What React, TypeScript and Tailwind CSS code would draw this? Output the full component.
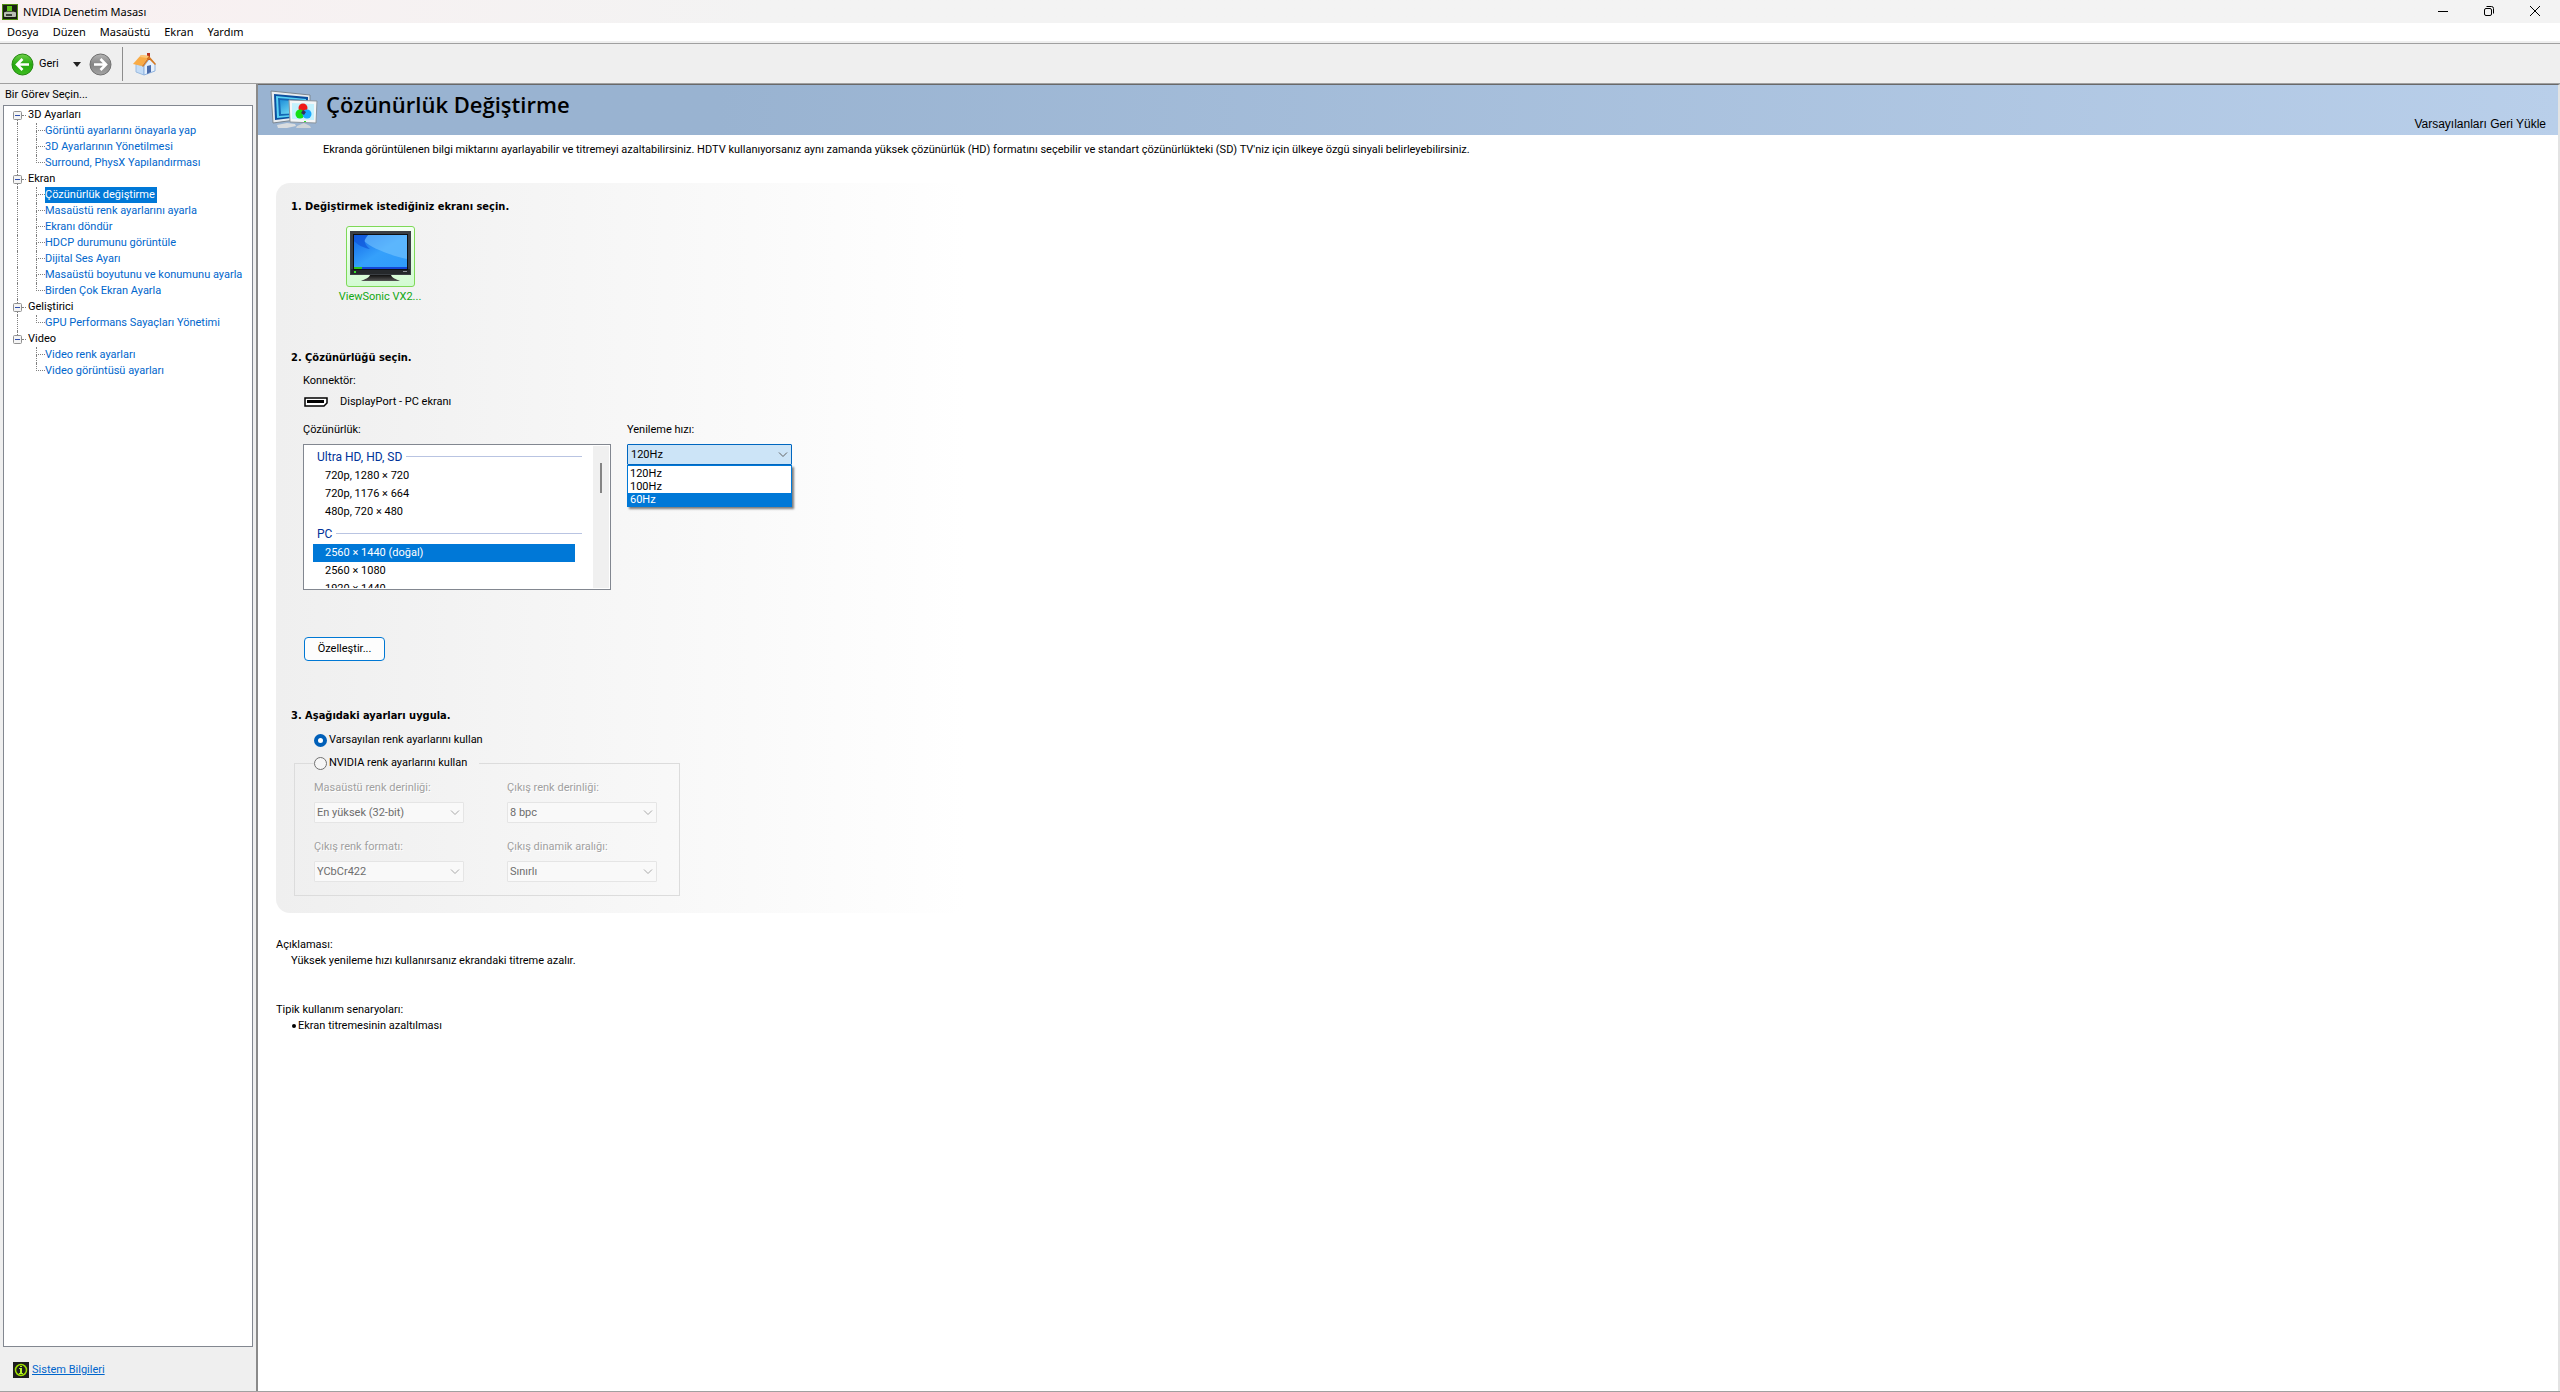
import { useState } from "react"

const taskGroups = [
  {
    title: "3D Ayarları",
    items: ["Görüntü ayarlarını önayarla yap", "3D Ayarlarının Yönetilmesi", "Surround, PhysX Yapılandırması"],
  },
  {
    title: "Ekran",
    items: [
      "Çözünürlük değiştirme",
      "Masaüstü renk ayarlarını ayarla",
      "Ekranı döndür",
      "HDCP durumunu görüntüle",
      "Dijital Ses Ayarı",
      "Masaüstü boyutunu ve konumunu ayarla",
      "Birden Çok Ekran Ayarla",
    ],
  },
  { title: "Geliştirici", items: ["GPU Performans Sayaçları Yönetimi"] },
  { title: "Video", items: ["Video renk ayarları", "Video görüntüsü ayarları"] },
]

const menus = ["Dosya", "Düzen", "Masaüstü", "Ekran", "Yardım"]
const refreshRates = ["120Hz", "100Hz", "60Hz"]
const hdModes = ["720p, 1280 × 720", "720p, 1176 × 664", "480p, 720 × 480"]
const pcModes = ["2560 × 1440 (doğal)", "2560 × 1080", "1920 × 1440"]

const colorFields = [
  { id: "desktop-depth", label: "Masaüstü renk derinliği:", value: "En yüksek (32-bit)" },
  { id: "output-depth", label: "Çıkış renk derinliği:", value: "8 bpc" },
  { id: "output-format", label: "Çıkış renk formatı:", value: "YCbCr422" },
  { id: "dynamic-range", label: "Çıkış dinamik aralığı:", value: "Sınırlı" },
]

function AppIcon() {
  return (
    <svg width="16" height="16" viewBox="0 0 16 16" aria-hidden="true">
      <rect width="16" height="16" fill="#1a1f14" />
      <rect x="0.5" y="0.5" width="15" height="15" fill="none" stroke="#4f8a10" />
      <rect x="5" y="2" width="5" height="5" fill="#5fc21a" />
      <path d="M4 7h8l1 2H3z" fill="#4a5a3a" />
      <rect x="2" y="8" width="12" height="5" rx="1" fill="#b9bdb4" />
      <rect x="4" y="10" width="6" height="2" fill="#3d4239" />
    </svg>
  )
}

function ArrowCircle({ forward = false }: { forward?: boolean }) {
  const id = forward ? "grad-forward" : "grad-back"
  return (
    <svg width="23" height="23" viewBox="0 0 23 23" aria-hidden="true">
      <defs>
        <linearGradient id={id} x1="0" y1="0" x2="0" y2="1">
          <stop offset="0" stopColor={forward ? "#b4b4b4" : "#6fd04a"} />
          <stop offset="0.5" stopColor={forward ? "#858585" : "#25a80f"} />
          <stop offset="1" stopColor={forward ? "#a3a3a3" : "#3ebd20"} />
        </linearGradient>
      </defs>
      <circle cx="11.5" cy="11.5" r="10.5" fill={`url(#${id})`} stroke={forward ? "#6f6f6f" : "#23860f"} />
      <path
        d={forward ? "M5 11.500H17M11.500 6L17 11.500L11.500 17" : "M18 11.500H6M11.500 6L6 11.500L11.500 17"}
        fill="none"
        stroke="#fff"
        strokeWidth="2.600"
      />
    </svg>
  )
}

function HomeIcon() {
  return (
    <svg width="24" height="24" viewBox="0 0 24 24" aria-hidden="true">
      <path d="M3 12L11 14V23L3 20z" fill="#c4dcf6" stroke="#9bbbe0" />
      <path d="M11 14L17 6L22 12V19L11 23z" fill="#e6f1fd" stroke="#8fb2de" />
      <path d="M14 1h3v7h-3z" fill="#b8321f" />
      <path d="M0 12L8 3L16 4L9 14z" fill="#f9ab45" />
      <path d="M8 3L16 4L14 6L7 5z" fill="#fcc77a" />
      <path d="M16 4L23 12L22 13L16 7L10 15L9 14z" fill="#d77a22" />
      <path d="M14 14l4-1v7l-4 2z" fill="#4b6cab" />
    </svg>
  )
}

function DisplaysIcon() {
  return (
    <svg width="48" height="40" viewBox="0 0 48 40" aria-hidden="true">
      <defs>
        <linearGradient id="big-screen" x1="0" y1="0" x2="1" y2="1">
          <stop offset="0" stopColor="#1f8fd8" />
          <stop offset="1" stopColor="#8df3ff" />
        </linearGradient>
      </defs>
      <path d="M7 35l10-2 8 1 1 2-9 2h-9z" fill="#d9dde0" />
      <path d="M1 1L40 5V28L3 33z" fill="#e8ecef" stroke="#7c8791" />
      <path d="M4 4L38 7V26L5 30z" fill="#0b4f9e" />
      <path d="M6 6L36 9V25L7 28z" fill="#58d2f6" />
      <path d="M8 8L34 10V24L9 26z" fill="#1467b4" />
      <path d="M10 10L32 12V23L11 24z" fill="url(#big-screen)" />
      <path d="M27 36l7-3 6 3 1 2H26z" fill="#cfd4d8" />
      <path d="M19 10L47 11L46 33L20 32z" fill="#f4f6f7" stroke="#8b949c" />
      <path d="M22 13L44 14V30L22 29z" fill="#c3f1fd" />
      <circle cx="33" cy="18" r="4.500" fill="#f01818" />
      <circle cx="30" cy="24" r="4.500" fill="#14e014" />
      <circle cx="37" cy="24" r="4.500" fill="#18a8ff" />
      <path d="M33 20l3 2-2 3-3-2z" fill="#303060" />
      <rect x="34" y="31" width="2" height="1" fill="#2fe02f" />
    </svg>
  )
}

function MonitorIcon() {
  return (
    <svg width="61" height="51" viewBox="0 0 61 51" aria-hidden="true">
      <defs>
        <linearGradient id="wallpaper" x1="0" y1="0" x2="1" y2="1">
          <stop offset="0" stopColor="#1268e8" />
          <stop offset="0.5" stopColor="#35a0fb" />
          <stop offset="1" stopColor="#2f9bfa" />
        </linearGradient>
        <linearGradient id="stand" x1="0" y1="0" x2="0" y2="1">
          <stop offset="0" stopColor="#111" />
          <stop offset="1" stopColor="#555" />
        </linearGradient>
      </defs>
      <rect width="61" height="44" fill="#3b3f44" />
      <rect x="1" y="38" width="59" height="5" fill="#25282b" />
      <rect x="3" y="3" width="55" height="36" fill="#0e1013" />
      <rect x="4" y="4" width="53" height="34" fill="url(#wallpaper)" />
      <path d="M18 4H57V28C38 24 20 16 14 10z" fill="#7cc8ff" opacity="0.55" />
      <path d="M4 4H18C13 9 14 13 20 18C12 17 6 12 4 10z" fill="#0e4fd6" opacity="0.6" />
      <rect x="4" y="36" width="53" height="2" fill="#1346d6" />
      <rect x="4" y="36" width="8" height="2" fill="#2fc51d" />
      <rect x="4" y="40" width="2" height="2" fill="#35e02b" />
      <rect x="53" y="40" width="4" height="1" fill="#8b8f94" />
      <path d="M20 44H41C42 47 46 48 50 50H11C15 48 19 47 20 44z" fill="url(#stand)" />
    </svg>
  )
}

function PortIcon() {
  return (
    <svg width="24" height="10" viewBox="0 0 24 10" aria-hidden="true">
      <path d="M1 1H23V6L20 9H1z" fill="#fff" stroke="#000" strokeWidth="1.500" />
      <rect x="3" y="3" width="17" height="3" fill="#000" />
    </svg>
  )
}

function InfoIcon() {
  return (
    <svg width="16" height="16" viewBox="0 0 16 16" aria-hidden="true">
      <rect width="16" height="16" fill="#1d1d1d" />
      <circle cx="8" cy="8" r="5.500" fill="none" stroke="#9fe000" strokeWidth="1.500" />
      <path d="M7 4h2v1H7zM6 6h3v5h1v1H6v-1h1V7H6z" fill="#b6f22a" />
    </svg>
  )
}

function Chevron({ className }: { className: string }) {
  return (
    <svg width="10" height="6" viewBox="0 0 10 6" className={className} aria-hidden="true">
      <path d="M1 0.500L5 4.500L9 0.500" fill="none" stroke="currentColor" />
    </svg>
  )
}

function TitleBar() {
  return (
    <header className="flex h-[23px] items-center justify-between bg-gradient-to-r from-[#f9f0f1] to-[#f3f3f3] to-30% pr-[2px] pl-[2px]">
      <div className="flex items-center gap-[5px]">
        <AppIcon />
        <h1 className="font-['Noto_Sans',sans-serif] text-[11px]">NVIDIA Denetim Masası</h1>
      </div>
      <div className="flex h-[21px] self-start">
        <button type="button" aria-label="Simge durumuna küçült" className="grid w-[46px] place-items-center">
          <svg width="10" height="10" viewBox="0 0 10 10">
            <path d="M0 5.500H10" stroke="#000" />
          </svg>
        </button>
        <button type="button" aria-label="Önceki boyut" className="grid w-[46px] place-items-center">
          <svg width="10" height="10" viewBox="0 0 10 10" fill="none" stroke="#000">
            <rect x="0.500" y="2.500" width="7" height="7" rx="1.500" />
            <path d="M2.500 0.500H7.500Q9.500 0.500 9.500 2.500V7.500" />
          </svg>
        </button>
        <button type="button" aria-label="Kapat" className="grid w-[46px] place-items-center">
          <svg width="10" height="10" viewBox="0 0 10 10">
            <path d="M0 0L10 10M10 0L0 10" stroke="#000" />
          </svg>
        </button>
      </div>
    </header>
  )
}

function Toolbar() {
  return (
    <div className="flex h-10 items-center border-b border-[#a0a0a0] bg-[#efefef] pt-[1px] pl-[11px]">
      <button type="button" className="flex items-center gap-[5px]">
        <ArrowCircle />
        Geri
      </button>
      <button type="button" aria-label="Geçmiş" className="ml-[14px]">
        <svg width="8" height="5" viewBox="0 0 8 5">
          <path d="M0 0H8L4 5z" fill="#222" />
        </svg>
      </button>
      <button type="button" aria-label="İleri" className="ml-2">
        <ArrowCircle forward />
      </button>
      <span className="ml-[10px] h-[34px] w-px bg-[#8d8d8d]" />
      <button type="button" aria-label="Ana sayfa" className="ml-[10px]">
        <HomeIcon />
      </button>
    </div>
  )
}

function TaskTree() {
  const [selected, setSelected] = useState("Çözünürlük değiştirme")

  return (
    <ul className="flex-1 border border-[#828790] bg-white pt-[1px] pl-[9px]">
      {taskGroups.map((group, g) => {
        const lastGroup = g === taskGroups.length - 1
        return (
          <li key={group.title}>
            <div className="flex h-4 items-center">
              <div className="flex h-4 w-[9px] flex-col">
                <span className={g === 0 ? "ml-1 h-[4px]" : "ml-1 h-[4px] border-l border-dotted border-[#808080]"} />
                <svg width="9" height="9" viewBox="0 0 9 9" aria-hidden="true">
                  <rect x="0.500" y="0.500" width="8" height="8" rx="1" fill="#f4f4f4" stroke="#919191" />
                  <path d="M2 4.500H7" stroke="#2f4fae" />
                </svg>
                <span className={lastGroup ? "h-[3px]" : "ml-1 h-[3px] border-l border-dotted border-[#808080]"} />
              </div>
              <span className="w-[4px] border-t border-dotted border-[#808080]" />
              <span className="pl-[2px]">{group.title}</span>
            </div>
            <ul>
              {group.items.map((item, i) => (
                <li key={item} className="flex h-4 pl-1">
                  <span className={lastGroup ? "w-[19px]" : "w-[19px] border-l border-dotted border-[#808080]"} />
                  <span className="flex w-[9px] flex-col">
                    <span className="h-2 border-b border-l border-dotted border-[#808080]" />
                    {i < group.items.length - 1 && <span className="h-2 border-l border-dotted border-[#808080]" />}
                  </span>
                  <a
                    href="#"
                    onClick={() => setSelected(item)}
                    className={
                      item === selected ? "bg-[#0078d7] pr-[2px] whitespace-nowrap text-white" : "whitespace-nowrap text-[#0066cc]"
                    }
                  >
                    {item}
                  </a>
                </li>
              ))}
            </ul>
          </li>
        )
      })}
    </ul>
  )
}

function Sidebar() {
  return (
    <aside className="flex w-[258px] shrink-0 flex-col border-r-2 border-[#8a8a8a] bg-[#efefef] pr-[3px] pl-[3px]">
      <h2 className="pt-[3px] pb-[2px] pl-[2px]">Bir Görev Seçin...</h2>
      <TaskTree />
      <a href="#" className="flex items-center gap-[3px] pt-[15px] pb-[13px] pl-[10px] text-[#0066cc] underline">
        <InfoIcon />
        Sistem Bilgileri
      </a>
    </aside>
  )
}

function GroupHeading({ children }: { children: string }) {
  return (
    <div className="flex h-[21px] items-center gap-1 pr-[11px] pl-3 text-[12px] text-[#003399]">
      {children}
      <span className="h-px flex-1 bg-[#b9c4e2]" />
    </div>
  )
}

function ResolutionList() {
  const [mode, setMode] = useState(pcModes[0])

  const option = (name: string) => (
    <li
      key={name}
      role="option"
      aria-selected={name === mode}
      onClick={() => setMode(name)}
      className={
        name === mode ? "mr-[18px] ml-2 h-[18px] bg-[#0078d7] pl-3 leading-[18px] text-white" : "mr-[18px] ml-2 h-[18px] pl-3 leading-[18px]"
      }
    >
      {name}
    </li>
  )

  return (
    <div className="flex h-[146px] w-[308px] border border-[#828790] bg-white p-[1px]">
      <div role="listbox" aria-labelledby="resolution-label" className="flex-1 overflow-hidden">
        <GroupHeading>Ultra HD, HD, SD</GroupHeading>
        <ul className="pb-[2px]">{hdModes.map(option)}</ul>
        <GroupHeading>PC</GroupHeading>
        <ul>{pcModes.map(option)}</ul>
      </div>
      <div className="flex w-4 justify-center bg-[#f0f0f0] pt-[17px]">
        <span className="h-[30px] w-[2px] bg-[#858585]" />
      </div>
    </div>
  )
}

function RefreshRate() {
  const [rate, setRate] = useState("120Hz")

  return (
    <div className="w-[165px]">
      <label htmlFor="refresh-rate" className="block">
        Yenileme hızı:
      </label>
      <div className="relative mt-[6px]">
        <select
          id="refresh-rate"
          value={rate}
          onChange={(e) => setRate(e.target.value)}
          className="block h-[21px] w-full appearance-none rounded-[1px] border border-[#0067c0] bg-[#cce4f7] pl-[3px]"
        >
          {refreshRates.map((r) => (
            <option key={r}>{r}</option>
          ))}
        </select>
        <Chevron className="pointer-events-none absolute top-2 right-1 text-[#606060]" />
        <ul className="absolute top-[21px] left-0 w-full border border-[#0078d7] bg-white pt-[1px] leading-[13px] shadow-[2px_2px_2px_rgba(0,0,0,0.5)]">
          {refreshRates.map((r) => (
            <li
              key={r}
              onClick={() => setRate(r)}
              className={r === "60Hz" ? "bg-[#0078d7] pl-[2px] text-white" : "pl-[2px]"}
            >
              {r}
            </li>
          ))}
        </ul>
      </div>
    </div>
  )
}

function ColorSettings() {
  const [source, setSource] = useState("default")
  const radio =
    "size-[13px] appearance-none rounded-full border border-[#707070] bg-[#f6f6f6] checked:border-4 checked:border-[#005fb8] checked:bg-white"

  return (
    <div>
      <label className="ml-[23px] flex items-center gap-[2px]">
        <input type="radio" name="source" checked={source === "default"} onChange={() => setSource("default")} className={radio} />
        Varsayılan renk ayarlarını kullan
      </label>
      <fieldset className="mt-[7px] ml-[3px] h-[141px] w-[386px] border border-[#dcdcdc] pl-[19px]">
        <legend className="pr-3">
          <label className="flex items-center gap-[2px]">
            <input type="radio" name="source" checked={source === "nvidia"} onChange={() => setSource("nvidia")} className={radio} />
            NVIDIA renk ayarlarını kullan
          </label>
        </legend>
        <div className="grid grid-cols-[150px_150px] gap-x-[43px] gap-y-4 pt-[9px]">
          {colorFields.map((field) => (
            <div key={field.id}>
              <label htmlFor={field.id} className="block text-[#a0a0a0] [text-shadow:1px_1px_0_#fff]">
                {field.label}
              </label>
              <div className="relative mt-[6px]">
                <select
                  id={field.id}
                  disabled
                  className="block h-[21px] w-full appearance-none rounded-[1px] border border-[#e5e5e5] bg-[#f9f9f9] pl-[2px] text-[#6d6d6d] opacity-100"
                >
                  <option>{field.value}</option>
                </select>
                <Chevron className="pointer-events-none absolute top-2 right-1 text-[#a8a8a8]" />
              </div>
            </div>
          ))}
        </div>
      </fieldset>
    </div>
  )
}

function StepTitle({ children }: { children: string }) {
  return <h3 className="font-['DejaVu_Sans_Condensed','DejaVu_Sans',sans-serif] font-bold">{children}</h3>
}

function Content() {
  return (
    <main className="flex-1 border-t border-r-2 border-t-[#696969] border-r-[#e3e3e3] bg-white">
      <div className="flex h-[50px] items-center justify-between bg-gradient-to-r from-[#99b3d1] from-20% to-[#b9cfea] pr-3 pl-3">
        <div className="flex gap-2">
          <DisplaysIcon />
          <h2 className="font-['Open_Sans',sans-serif] text-[22px] leading-[28px] font-semibold">Çözünürlük Değiştirme</h2>
        </div>
        <button type="button" className="self-end pb-[3px] font-['Liberation_Sans',sans-serif] text-[12px] leading-4">
          Varsayılanları Geri Yükle
        </button>
      </div>

      <p className="pt-[7px] pl-[65px]">
        Ekranda görüntülenen bilgi miktarını ayarlayabilir ve titremeyi azaltabilirsiniz. HDTV kullanıyorsanız aynı zamanda
        yüksek çözünürlük (HD) formatını seçebilir ve standart çözünürlükteki (SD) TV'niz için ülkeye özgü sinyali
        belirleyebilirsiniz.
      </p>

      <div className="mt-[25px] ml-[18px] w-[690px] rounded-[14px] bg-gradient-to-r from-[#efefef] to-white pt-4 pb-[17px] pl-[15px]">
        <section>
          <StepTitle>1. Değiştirmek istediğiniz ekranı seçin.</StepTitle>
          <button
            type="button"
            className="mt-[11px] ml-[49px] flex w-20 flex-col items-center gap-[2px] whitespace-nowrap text-[#12a812]"
          >
            <span className="rounded-[3px] border border-[#7ed957] bg-gradient-to-b from-[#f4fff4] to-[#d2fbd2] px-[3px] pt-1 pb-1">
              <MonitorIcon />
            </span>
            ViewSonic VX2...
          </button>
        </section>

        <section className="mt-[45px]">
          <StepTitle>2. Çözünürlüğü seçin.</StepTitle>
          <div className="ml-3">
            <p className="mt-[7px]">Konnektör:</p>
            <div className="mt-[5px] flex items-center gap-3 pl-[1px]">
              <PortIcon />
              DisplayPort - PC ekranı
            </div>
            <div className="mt-3 flex gap-4">
              <div>
                <p id="resolution-label" className="mb-[6px]">
                  Çözünürlük:
                </p>
                <ResolutionList />
              </div>
              <RefreshRate />
            </div>
            <button
              type="button"
              className="mt-[47px] ml-[1px] h-6 w-[81px] rounded-[4px] border border-[#0078d4] bg-[#fdfdfd] text-center"
            >
              Özelleştir...
            </button>
          </div>
        </section>

        <section className="mt-[47px]">
          <StepTitle>3. Aşağıdaki ayarları uygula.</StepTitle>
          <div className="mt-2">
            <ColorSettings />
          </div>
        </section>
      </div>

      <section className="mt-6 ml-[18px]">
        <h3>Açıklaması:</h3>
        <p className="pl-[15px]">Yüksek yenileme hızı kullanırsanız ekrandaki titreme azalır.</p>
      </section>
      <section className="mt-[33px] ml-[18px]">
        <h3>Tipik kullanım senaryoları:</h3>
        <ul className="pl-[15px]">
          <li className="flex items-center gap-[2px]">
            <span className="ml-[1px] size-1 rounded-full bg-black" />
            Ekran titremesinin azaltılması
          </li>
        </ul>
      </section>
    </main>
  )
}

export default function App() {
  return (
    <div className="flex min-h-screen flex-col bg-[#efefef] font-['Roboto',sans-serif] text-[11px] leading-4 text-black">
      <TitleBar />
      <nav className="flex h-[20px] items-center gap-[14px] border-b-2 border-[#efefef] bg-white pl-[7px] font-['Noto_Sans',sans-serif]">
        {menus.map((menu) => (
          <button key={menu} type="button">
            {menu}
          </button>
        ))}
      </nav>
      <div className="border-t border-[#a0a0a0]">
        <Toolbar />
      </div>
      <div className="flex flex-1 border-b border-[#a0a0a0]">
        <Sidebar />
        <Content />
      </div>
    </div>
  )
}
